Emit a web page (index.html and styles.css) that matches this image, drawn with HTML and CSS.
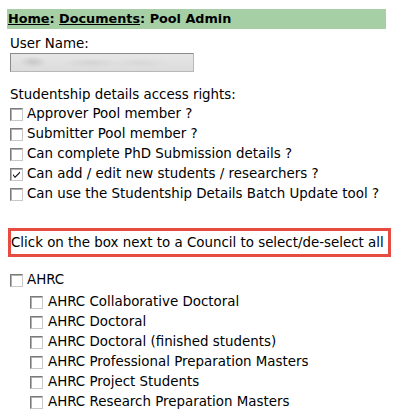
FILE: index.html
```html
<!DOCTYPE html>
<html>
<head>
<meta charset="utf-8">
<link rel="stylesheet" href="styles.css">
</head>
<body>
<div class="crumb"><a href="#">Home</a>: <a href="#">Documents</a>: Pool Admin</div>
<div class="user-label">User Name:</div>
<div class="user-input"></div>
<div class="rights-label">Studentship details access rights:</div>
<div class="row"><span class="cb"></span><span>Approver Pool member ?</span></div>
<div class="row"><span class="cb"></span><span>Submitter Pool member ?</span></div>
<div class="row"><span class="cb"></span><span>Can complete PhD Submission details ?</span></div>
<div class="row"><span class="cb checked"><svg width="9" height="9" viewBox="0 0 9 9"><path d="M1 4 L3 6.5 L8 1.5 L8 3 L3 8 L1 5.5 Z" fill="#000"/></svg></span><span>Can add / edit new students / researchers ?</span></div>
<div class="row"><span class="cb"></span><span>Can use the Studentship Details Batch Update tool ?</span></div>
<div class="notice">Click on the box next to a Council to select/de-select all</div>
<div class="row council"><span class="cb"></span><span>AHRC</span></div>
<div class="subs">
<div class="row sub"><span class="cb"></span><span>AHRC Collaborative Doctoral</span></div>
<div class="row sub"><span class="cb"></span><span>AHRC Doctoral</span></div>
<div class="row sub"><span class="cb"></span><span>AHRC Doctoral (finished students)</span></div>
<div class="row sub"><span class="cb"></span><span>AHRC Professional Preparation Masters</span></div>
<div class="row sub"><span class="cb"></span><span>AHRC Project Students</span></div>
<div class="row sub"><span class="cb"></span><span>AHRC Research Preparation Masters</span></div>
</div>
</body>
</html>
```
FILE: styles.css
```css
html, body {
  margin: 0;
  padding: 0;
  background: #fff;
}
body {
  font-family: "DejaVu Sans", Verdana, sans-serif;
  font-size: 13.4px;
  color: #000;
  padding-top: 9px;
  overflow: hidden;
}
.crumb {
  margin: 0 23px 0 7px;
  height: 20px;
  line-height: 20px;
  background: #a6cfa6;
  font-size: 12.8px;
  font-weight: bold;
  padding-left: 1px;
  white-space: nowrap;
}
.crumb a {
  color: #000;
  text-decoration: underline;
}
.user-label {
  margin: 6px 0 0 10px;
  line-height: 18px;
}
.user-input {
  margin-left: 10px;
  width: 184px;
  height: 19px;
  box-sizing: border-box;
  border: 1px solid #8a8a8a;
  border-right-color: #b8b8b8;
  border-bottom-color: #b8b8b8;
  background:
    radial-gradient(ellipse 14px 6px at 22px 8px, #c8c8c8, rgba(220,220,220,0)),
    radial-gradient(ellipse 30px 5px at 80px 9px, #d4d4d4, rgba(225,225,225,0)),
    radial-gradient(ellipse 30px 5px at 130px 9px, #d8d8d8, rgba(225,225,225,0)),
    linear-gradient(#e6e6e6, #dcdcdc);
}
.rights-label {
  margin: 14px 0 0 10px;
  line-height: 18px;
}
.row {
  display: flex;
  align-items: center;
  gap: 4px;
  height: 20px;
  line-height: 20px;
  padding-left: 10px;
  white-space: nowrap;
}
.cb {
  flex: none;
  width: 13px;
  height: 13px;
  box-sizing: border-box;
  border: 1px solid #7a7a7a;
  border-right-color: #c8c8c8;
  border-bottom-color: #c8c8c8;
  box-shadow: inset 1px 1px 0 #b0b0b0;
  background: #fff;
  display: flex;
  align-items: center;
  justify-content: center;
}
.notice {
  margin: 24px 18px 0 8px;
  height: 29px;
  box-sizing: border-box;
  border: 3px solid #e84c40;
  line-height: 23px;
  white-space: nowrap;
}
.council {
  margin-top: 13px;
}
.subs {
  margin-top: 2px;
}
.sub {
  padding-left: 30px;
  gap: 5px;
}
```
